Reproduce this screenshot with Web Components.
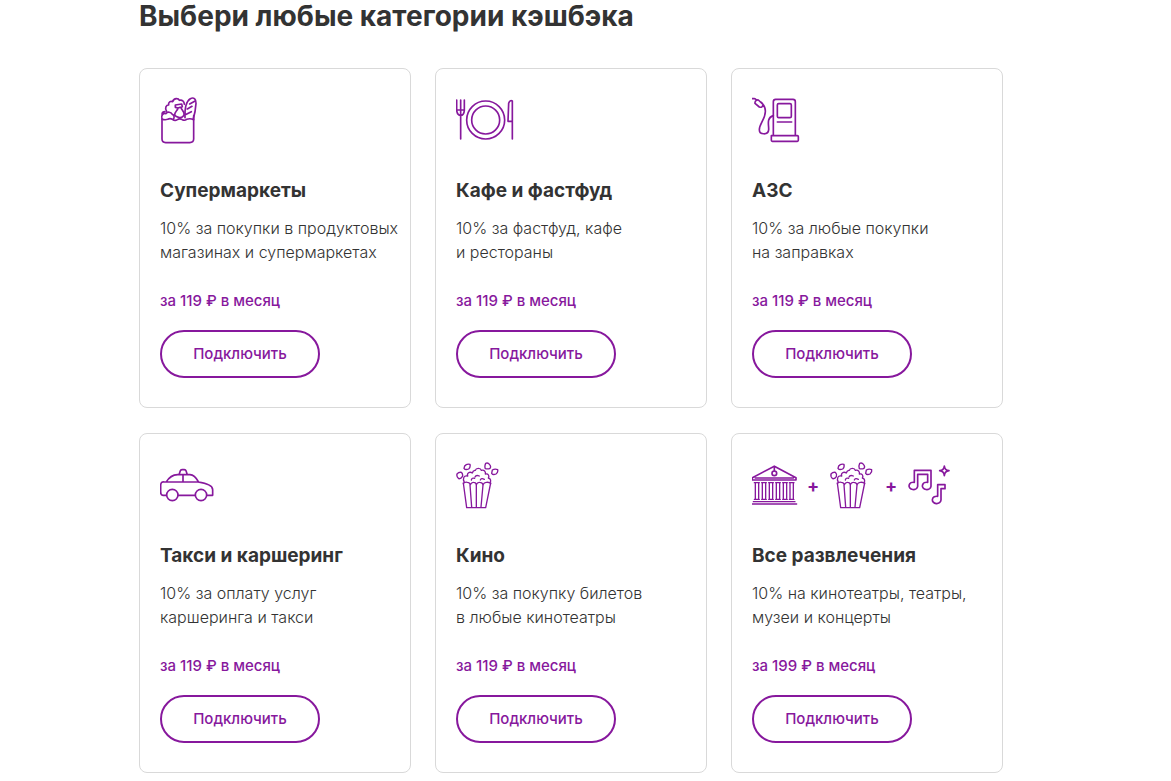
<!DOCTYPE html>
<html lang="ru">
<head>
<meta charset="utf-8">
<meta name="viewport" content="width=device-width, initial-scale=1">
<title>Категории кэшбэка</title>
<style>
  body { margin: 0; background: #fff; color: #333; font-family: Inter, "Liberation Sans", sans-serif; }
</style>
</head>
<body>
<cashback-page heading="Выбери любые категории кэшбэка">
  <cashback-card price="119">
    <cashback-icon slot="icon" name="market"></cashback-icon>
    <span slot="title">Супермаркеты</span>
    10% за покупки в продуктовых<br>магазинах и супермаркетах
  </cashback-card>
  <cashback-card price="119">
    <cashback-icon slot="icon" name="cafe"></cashback-icon>
    <span slot="title">Кафе и фастфуд</span>
    10% за фастфуд, кафе<br>и рестораны
  </cashback-card>
  <cashback-card price="119">
    <cashback-icon slot="icon" name="fuel"></cashback-icon>
    <span slot="title">АЗС</span>
    10% за любые покупки<br>на заправках
  </cashback-card>
  <cashback-card price="119">
    <cashback-icon slot="icon" name="taxi"></cashback-icon>
    <span slot="title">Такси и каршеринг</span>
    10% за оплату услуг<br>каршеринга и такси
  </cashback-card>
  <cashback-card price="119">
    <cashback-icon slot="icon" name="cinema"></cashback-icon>
    <span slot="title">Кино</span>
    10% за покупку билетов<br>в любые кинотеатры
  </cashback-card>
  <cashback-card price="199">
    <cashback-icon slot="icon" name="museum"></cashback-icon>
    <b slot="icon">+</b>
    <cashback-icon slot="icon" name="popcorn"></cashback-icon>
    <b slot="icon">+</b>
    <cashback-icon slot="icon" name="music"></cashback-icon>
    <span slot="title">Все развлечения</span>
    10% на кинотеатры, театры,<br>музеи и концерты
  </cashback-card>
</cashback-page>

<template id="page-template">
  <style>
    :host { display: block; }
    main { padding: 0 168px 8px 139px; }
    h2 { margin: 0 0 36px; font-size: 28px; line-height: 32px; font-weight: 700; }
    .grid { display: grid; grid-template-columns: repeat(auto-fit, minmax(256px, 1fr)); gap: 25px 24px; }
    @media (max-width: 900px) { main { padding-left: 24px; padding-right: 24px; } }
  </style>
  <main>
    <h2></h2>
    <div class="grid"><slot></slot></div>
  </main>
</template>

<template id="card-template">
  <style>
    :host { display: block; }
    article { box-sizing: border-box; height: 100%; display: flex; flex-direction: column; align-items: flex-start;
      padding: 21px 0 29px 20px; border: 1px solid #d9d9d9; border-radius: 8px; }
    .icons { display: flex; height: 60px; color: #87189d; }
    .icons ::slotted(b) { width: 30px; text-align: center; font-size: 18px; line-height: 62px; font-weight: 700; }
    h3 { margin: 29px 0 13px; font-size: 19px; line-height: 24px; font-weight: 700; }
    p { margin: 0; font-size: 16px; line-height: 24px; font-weight: 300; }
    .price { margin: 25px 0 17px; color: #87189d; font-size: 15px; font-weight: 500; }
    button { box-sizing: border-box; width: 160px; height: 48px; margin-top: auto; padding: 0 0 2px; border: 2px solid #87189d;
      border-radius: 24px; background: #fff; color: #87189d; font: inherit; font-size: 15px; font-weight: 500; cursor: pointer; }
    button:hover { background: #f7eefa; }
  </style>
  <article>
    <div class="icons"><slot name="icon"></slot></div>
    <h3><slot name="title"></slot></h3>
    <p><slot></slot></p>
    <p class="price"></p>
    <button type="button">Подключить</button>
  </article>
</template>

<script>
const popcorn = `
  <g stroke-width="4">
  <path d="M40 84L50 158H107L122 84M60 90L65 156M79 90V156M99 90L93 156"/>
  <path d="M40 86q5-6 12-4q7 0 9 7q4-8 10-7q7 0 8 7q3-8 10-7q8 0 10 7q4-8 11-7q8-1 12 4"/>
  <path d="M43 82C37 70 42 60 53 63C50 54 59 49 67 54C69 46 72 47 76 46C78 38 92 38 94 46C102 43 108 50 106 57C115 55 119 63 115 69C122 71 123 76 121 82"/>
  <path d="M64 75Q66 67 74 70M75 66Q78 59 88 63M91 75Q94 68 103 73"/>
  <path d="M44 33Q50 25 60 28Q62 37 56 42Q46 46 42 40ZM21 57Q26 51 34 52Q40 58 37 65Q33 72 26 71Q19 66 21 57ZM107 25Q114 22 119 29Q124 35 120 40Q114 43 106 41Q103 33 107 25ZM127 45Q135 40 143 44Q145 51 138 57Q129 61 125 55Z"/>
  </g>`;

const icons = {
  market: { box: [30, 0, 40, 60], art: `
    <path d="M36 87V147Q36 157 47 158H119Q131 157 131 147V87"/>
    <path d="M36 87C32 75 40 69 48 71C52 64 63 66 67 73C74 75 73 84 70 88M36 87Q44 91 53 88Q60 84 67 88Q75 94 82 89Q89 84 97 89Q104 93 110 88Q120 84 131 89V77M36 72Q37 65 45 65"/>
    <path d="M50 64C43 53 49 45 56 45C54 36 62 32 68 35C72 22 86 25 88 31C96 28 103 34 103 43"/>
    <path d="M105 83C104 57 109 33 121 26C132 20 139 29 138 40C137 55 134 73 130 86M119 42L134 34M112 57L126 49M109 73L124 65"/>
    <path d="M74 76C74 63 82 64 84 54L76 52V45L95 42L97 50L84 54M93 53C94 61 103 59 102 76Q96 85 86 82Q78 81 74 76"/>` },
  cafe: { box: [18, 0, 66, 60], art: `
    <path d="M32 30V147M20 30V61Q22 76 32 76Q42 76 43 61V30M20 60H43"/>
    <circle cx="107" cy="90" r="57"/><circle cx="107" cy="90" r="42"/>
    <path d="M187 147V33Q180 29 176 40L174 94H187"/>` },
  fuel: { box: [21, 0, 50, 60], art: `
    <path d="M85 136V35Q85 28 92 28H144Q151 28 151 35V136M79 137H157Q160 137 160 140V151Q160 154 157 154H82Q79 154 79 151Z"/>
    <rect x="97" y="41" width="42" height="42" rx="4"/>
    <path d="M97 96H140M21 26H28Q31 26 35 31M35 31Q29 33 30 40L43 51Q53 54 54 43L40 30Q37 29 35 31M49 37C55 44 62 50 61 65C60 89 43 101 43 119C43 135 70 136 71 119C72 105 63 84 85 77"/>` },
  taxi: { box: [15, -15, 60, 60], art: `
    <path d="M34 106H24Q17 106 17 96V75Q18 64 28 66H129Q173 72 173 89V106H157M70 106H120M34 66Q46 45 68 44H105Q119 45 130 65M84 44V66M72 44L76 32Q77 29 81 29H88Q92 29 93 32L97 44"/>
    <circle cx="52" cy="105" r="17"/><circle cx="138" cy="105" r="17"/>` },
  cinema: { box: [18, 0, 48, 60], art: popcorn },
  popcorn: { box: [12, 0, 48, 60], art: popcorn },
  museum: { box: [21, 0, 46, 60], art: `
    <path d="M22 75V68L88 34L153 68V75ZM29 75H146M31 69H145"/><circle cx="88" cy="55" r="7"/><path d="M88 35V47"/>
    <path d="M28 83H43M50 83H64M71 83H85M92 83H106M113 83H127M133 83H147M31 83V132M41 83V132M52 83V132M62 83V132M73 83V132M83 83V132M94 83V132M104 83V132M115 83V132M125 83V132M135 83V132M145 83V132M28 133H43M50 133H64M71 133H85M92 133H106M113 133H127M133 133H147M25 140H150M21 147H155" stroke-width="4"/>` },
  music: { box: [33, 0, 50, 60], art: `
    <path d="M58 82V46H108V94M68 94V58H98V82M68 94A13 11 0 1 1 58 82M108 94A13 11 0 1 1 98 82M138 135V101H150V89H128V124A13 11 0 1 0 138 135"/>
    <path d="M148 33Q149 46 162 47Q149 49 148 62Q147 49 134 47Q147 46 148 33Z"/>` }
};

function stamp(host, id) {
  const root = host.attachShadow({ mode: "open" });
  root.append(document.getElementById(id).content.cloneNode(true));
  return root;
}

class CashbackIcon extends HTMLElement {
  connectedCallback() {
    if (this.shadowRoot) return;
    const { box: [x, y, w, h], art } = icons[this.getAttribute("name")];
    this.attachShadow({ mode: "open" }).innerHTML = `
      <style>:host { display: block; flex: none; } svg { display: block; }</style>
      <svg width="${w}" height="${h}" viewBox="${x} ${y} ${w * 3} ${h * 3}" fill="none" stroke="currentColor"
        stroke-width="5" stroke-linecap="round" stroke-linejoin="round" aria-hidden="true">${art}</svg>`;
  }
}

class CashbackCard extends HTMLElement {
  connectedCallback() {
    if (this.shadowRoot) return;
    const root = stamp(this, "card-template");
    root.querySelector(".price").textContent = `за ${this.getAttribute("price")} ₽ в месяц`;
  }
}

class CashbackPage extends HTMLElement {
  connectedCallback() {
    if (this.shadowRoot) return;
    stamp(this, "page-template").querySelector("h2").textContent = this.getAttribute("heading");
  }
}

customElements.define("cashback-icon", CashbackIcon);
customElements.define("cashback-card", CashbackCard);
customElements.define("cashback-page", CashbackPage);
</script>
</body>
</html>
